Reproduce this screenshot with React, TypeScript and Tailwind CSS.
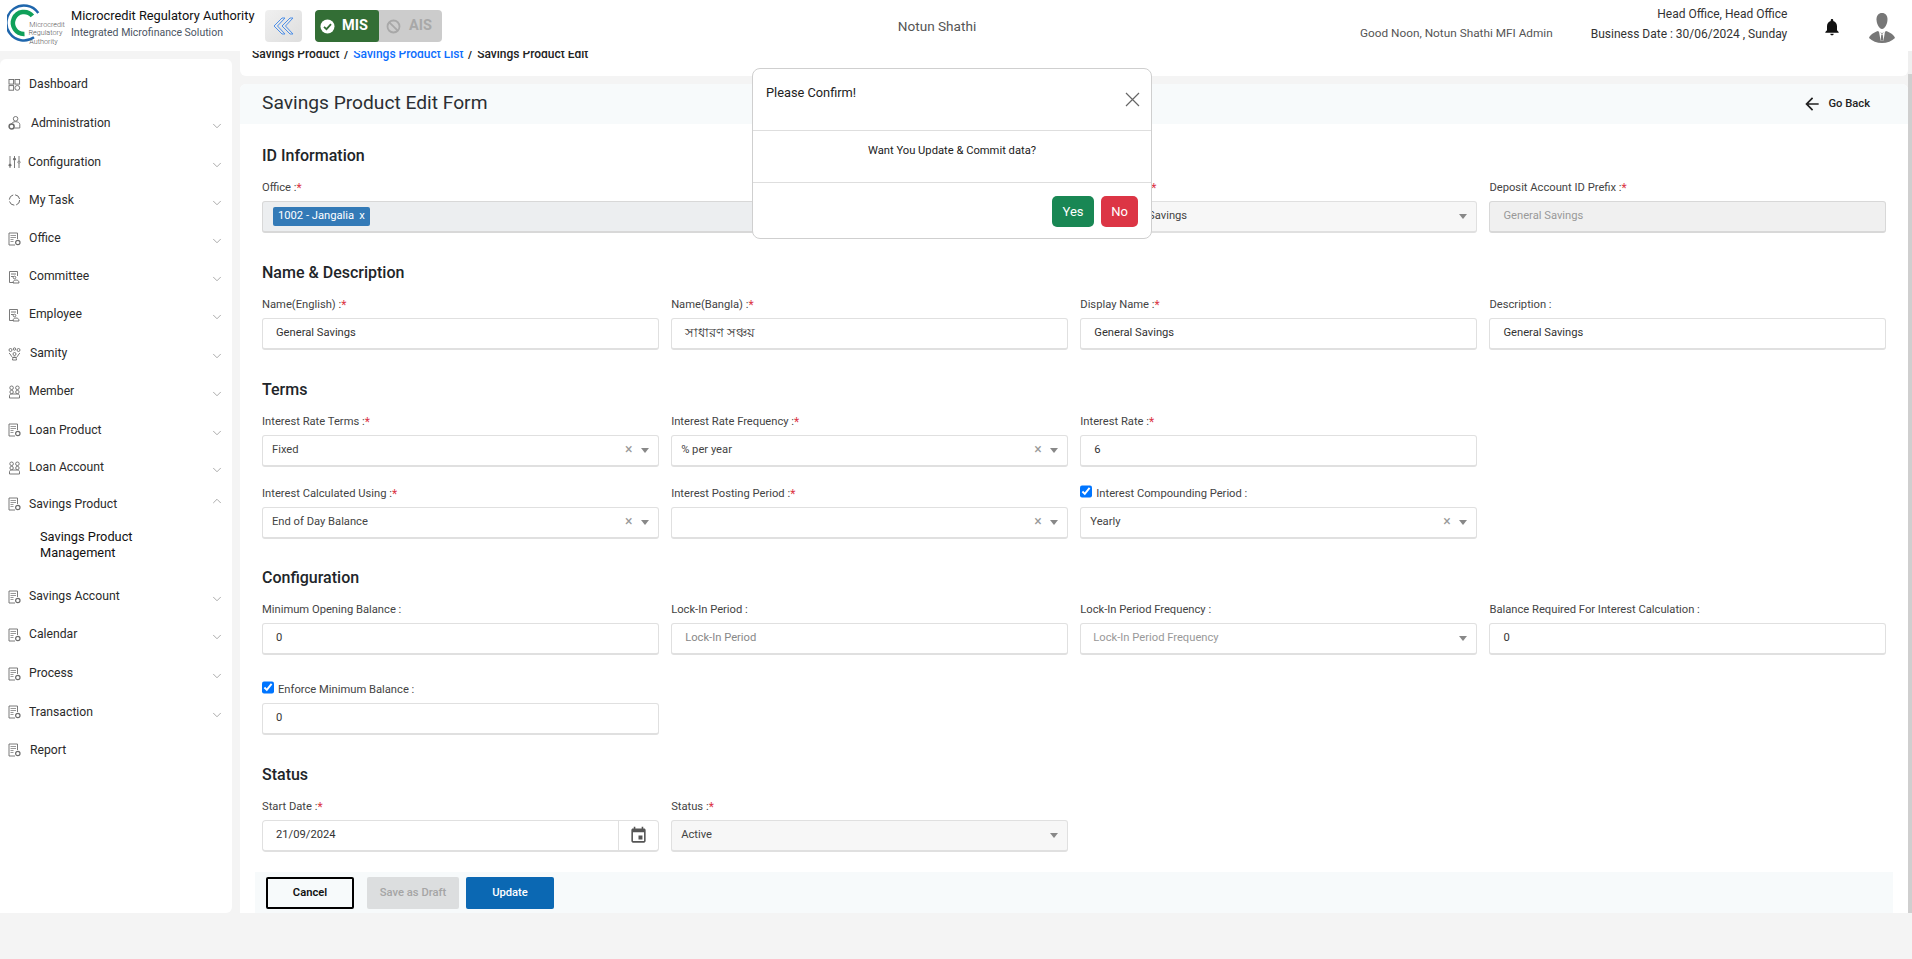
import { ChevronDown, ChevronUp } from "lucide-react"

type NavIcon = "grid" | "admin" | "sliders" | "task" | "doc" | "committee" | "samity" | "people"

const navItems: { label: string; icon: NavIcon; row: string; text: string; open?: boolean; none?: boolean }[] = [
    { label: "Dashboard", icon: "grid", row: "h-[37px]", text: "ml-[8px]", none: true },
    { label: "Administration", icon: "admin", row: "h-[40px]", text: "ml-[10px]" },
    { label: "Configuration", icon: "sliders", row: "h-[38px]", text: "ml-[7px]" },
    { label: "My Task", icon: "task", row: "h-[38px]", text: "ml-[8px]" },
    { label: "Office", icon: "doc", row: "h-[39px]", text: "ml-[8px]" },
    { label: "Committee", icon: "committee", row: "h-[37px]", text: "ml-[8px]" },
    { label: "Employee", icon: "committee", row: "h-[39px]", text: "ml-[8px]" },
    { label: "Samity", icon: "samity", row: "h-[39px]", text: "ml-[9px]" },
    { label: "Member", icon: "people", row: "h-[37px]", text: "ml-[8px]" },
    { label: "Loan Product", icon: "doc", row: "h-[40px]", text: "ml-[8px]" },
    { label: "Loan Account", icon: "people", row: "h-[35px]", text: "ml-[8px]" },
    { label: "Savings Product", icon: "doc", row: "h-[38px]", text: "ml-[8px]", open: true },
]

const navItemsBottom: typeof navItems = [
    { label: "Savings Account", icon: "doc", row: "h-[37px]", text: "ml-[8px]" },
    { label: "Calendar", icon: "doc", row: "h-[39px]", text: "ml-[8px]" },
    { label: "Process", icon: "doc", row: "h-[39px]", text: "ml-[8px]" },
    { label: "Transaction", icon: "doc", row: "h-[38px]", text: "ml-[8px]" },
    { label: "Report", icon: "doc", row: "h-[38px]", text: "ml-[9px]", none: true },
]

function SideIcon({ name }: { name: NavIcon }) {
    const common = { width: 13, height: 14, viewBox: "0 0 13 14", fill: "none", stroke: "#6b6b6b", strokeWidth: 0.9 }
    if (name === "grid") {
        return (
            <svg {...common}>
                <rect x="1" y="1.5" width="4.6" height="4.6" />
                <rect x="7" y="1.5" width="4.6" height="4.6" />
                <rect x="1" y="7.6" width="4.6" height="4.6" />
                <circle cx="9.3" cy="9.9" r="2.4" />
            </svg>
        )
    }
    if (name === "admin") {
        return (
            <svg {...common}>
                <circle cx="7.6" cy="2.8" r="2.3" />
                <path d="M3.5 8.5c0-1.800 1.800-2.800 4.100-2.800s4.200 1 4.200 2.800V12H6.500" />
                <circle cx="3.6" cy="10.400" r="2.500" strokeWidth="1.500" />
            </svg>
        )
    }
    if (name === "sliders") {
        return (
            <svg {...common}>
                <path d="M2 1v8M2 11.500V13M6.500 1v2M6.500 5.500V13M11 1v5M11 8.500V13" />
                <circle cx="2" cy="10.200" r="1.100" fill="#6b6b6b" />
                <circle cx="6.500" cy="4.200" r="1.100" fill="#6b6b6b" />
                <circle cx="11" cy="7.200" r="1.100" />
            </svg>
        )
    }
    if (name === "task") {
        return (
            <svg {...common}>
                <circle cx="6.500" cy="7" r="5.200" strokeDasharray="6.200 1.970" strokeWidth="1" />
            </svg>
        )
    }
    if (name === "doc") {
        return (
            <svg {...common}>
                <path d="M9.500 7V1H1v12h6" />
                <path d="M2.500 3.500h5.500M2.500 5.500h5.500M2.500 7.500h3M2.500 9.500h3" strokeWidth="0.7" />
                <circle cx="9.800" cy="10.500" r="2.200" strokeWidth="1.200" />
            </svg>
        )
    }
    if (name === "committee") {
        return (
            <svg {...common}>
                <path d="M9.500 6V1.500H1.500v11h4" />
                <path d="M3 4h5M3 6.500h2.500" />
                <circle cx="6.500" cy="7.500" r="1.300" />
                <path d="M5 13c0-2 1-3 3-3s3 1 3 3z" />
            </svg>
        )
    }
    if (name === "samity") {
        return (
            <svg {...common}>
                <circle cx="2.500" cy="3" r="1.500" />
                <circle cx="10.500" cy="3" r="1.500" />
                <circle cx="6.500" cy="2" r="1.200" />
                <path d="M1 6c1.500 1 2 3 3.500 4.500h4C10 9 10.500 7 12 6" />
                <circle cx="6.500" cy="7" r="1.500" />
                <path d="M4.500 13c0-2 .8-3 2-3s2 1 2 3z" />
            </svg>
        )
    }
    return (
        <svg {...common}>
            <circle cx="3.600" cy="2.800" r="1.800" />
            <circle cx="9.400" cy="2.800" r="1.800" />
            <circle cx="3.600" cy="7" r="1.700" />
            <circle cx="9.400" cy="7" r="1.700" />
            <path d="M1.500 13V10.500c0-.8.8-1.500 2-1.500h6c1.200 0 2 .7 2 1.500V13z" />
        </svg>
    )
}

function NavRow({ item }: { item: (typeof navItems)[number] }) {
    return (
        <div className={`flex items-center pl-[8px] pr-[8px] ${item.row}`}>
            <span className="flex w-[13px] shrink-0 justify-center"><SideIcon name={item.icon} /></span>
            <span className={`flex-1 text-[12.200px] text-[#2b2b2b] ${item.text}`}>{item.label}</span>
            {!item.none && (item.open
                ? <ChevronUp className="-mt-[6px] h-[14px] w-[14px] text-[#888]" strokeWidth={1.2} />
                : <ChevronDown className="mt-[5px] h-[14px] w-[14px] text-[#888]" strokeWidth={1.2} />)}
        </div>
    )
}

function Sidebar() {
    return (
        <aside className="mt-[8px] w-[232px] shrink-0 rounded-t-[6px] rounded-br-[6px] bg-white pt-[7px]">
            {navItems.map((item) => <NavRow key={item.label} item={item} />)}
            <div className="h-[55px] pl-[40px] pt-[6px] text-[12.800px] leading-[16px] text-[#111]">
                Savings Product<br />Management
            </div>
            {navItemsBottom.map((item) => <NavRow key={item.label} item={item} />)}
        </aside>
    )
}

function Logo() {
    return (
        <svg width="58" height="42" viewBox="0 0 58 42" className="shrink-0">
            <path d="M31.300 9A17.500 17.500 0 1 0 27 33.300" fill="none" stroke="#1f66ac" strokeWidth="2.400" />
            <path d="M25.400 11.900A11 11 0 1 0 17.500 29.900" fill="none" stroke="#10a05a" strokeWidth="4.500" />
            <text x="22.300" y="22.500" fontSize="7.200" fill="#555" fontFamily="Roboto, sans-serif" fontWeight="300">Microcredit</text>
            <text x="21.500" y="30.500" fontSize="7.200" fill="#555" fontFamily="Roboto, sans-serif" fontWeight="300">Regulatory</text>
            <text x="22.300" y="39.500" fontSize="7.200" fill="#555" fontFamily="Roboto, sans-serif" fontWeight="300">Authority</text>
        </svg>
    )
}

function Header() {
    return (
        <header className="flex h-[51px] items-start bg-white">
            <div className="ml-[7px] mt-[4px]"><Logo /></div>
            <div className="ml-[6px] mt-[6px] w-[194px]">
                <div className="text-[12.800px] leading-[19px] text-[#111]">Microcredit Regulatory Authority</div>
                <div className="text-[10.500px] leading-[15px] text-[#4b5563]">Integrated Microfinance Solution</div>
            </div>
            <button className="mt-[10px] flex h-[32px] w-[37px] items-center justify-center rounded-[4px] bg-gradient-to-br from-[#f0f0f0] to-[#dedede]">
                <svg width="22" height="18" viewBox="0 0 22 18" fill="none" stroke="#4d8fe8" strokeWidth="1" strokeLinejoin="round">
                    <path d="M9 1 1 9l8 8h3L4.500 9 12 1z" />
                    <path d="M17 1 9 9l8 8h3L12.500 9 20 1z" />
                </svg>
            </button>
            <div className="ml-[13px] mt-[10px] flex h-[32px] w-[127px] overflow-hidden rounded-[4px] bg-[#cccccc]">
                <div className="flex w-[64px] items-center gap-[7px] rounded-[3px] bg-[#336e35] pl-[5px]">
                    <svg width="15" height="15" viewBox="0 0 15 15">
                        <circle cx="7.500" cy="7.500" r="7" fill="#fff" />
                        <path d="M4 7.800 6.500 10.200 11 5.200" fill="none" stroke="#336e35" strokeWidth="1.800" />
                    </svg>
                    <span className="text-[14.500px] font-bold text-white">MIS</span>
                </div>
                <div className="flex flex-1 items-center gap-[8px] pl-[7px]">
                    <svg width="15" height="15" viewBox="0 0 15 15" fill="none" stroke="#a8a8a8" strokeWidth="1.800">
                        <circle cx="7.500" cy="7.500" r="6" />
                        <path d="M3.300 3.300 11.700 11.700" />
                    </svg>
                    <span className="text-[14.500px] font-bold text-[#a8a8a8]">AIS</span>
                </div>
            </div>
            <div className="ml-[435px] mt-[16px] w-[120px] text-center text-[13.600px] leading-[20px] text-[#555]">Notun Shathi</div>
            <div className="ml-[363px] mt-[24px] text-[11.800px] leading-[18px] text-[#555]">Good Noon, Notun Shathi MFI Admin</div>
            <div className="ml-[38px] mt-[5px] text-right text-[12px] leading-[19px] text-[#333]">
                <div>Head Office, Head Office</div>
                <div className="mt-[1px]">Business Date : 30/06/2024 , Sunday</div>
            </div>
            <svg width="20" height="20" viewBox="0 0 24 24" fill="#111" className="ml-[35px] mt-[17px] shrink-0">
                <path d="M12 22c1.100 0 2-.9 2-2h-4c0 1.100.89 2 2 2zm6-6v-5c0-3.070-1.640-5.640-4.500-6.320V4c0-.83-.67-1.500-1.500-1.500s-1.500.67-1.500 1.500v.68C7.630 5.360 6 7.920 6 11v5l-2 2v1h16v-1l-2-2z" />
            </svg>
            <svg width="26" height="30" viewBox="0 0 26 30" className="ml-[27px] mt-[13px] shrink-0">
                <path d="M13 0c3.500 0 5.500 2.500 5.500 6.500 0 4-2.500 9.500-5.500 9.500S7.500 10.500 7.500 6.500C7.500 2.500 9.500 0 13 0z" fill="#777" />
                <path d="M0 25c1-3.500 5-5.500 9-7 1 1 2.500 2 4 2s3-1 4-2c4 1.500 8 3.500 9 7-3 3-8 5-13 5S3 28 0 25z" fill="#777" />
                <path d="M10 18.500 13 21l3-2.500-1.500 9h-3z" fill="#fff" />
                <path d="M12.300 21.500h1.400l.6 5-1.300 1.500-1.300-1.500z" fill="#777" />
            </svg>
        </header>
    )
}

function Label({ text, required, check }: { text: string; required?: boolean; check?: boolean }) {
    return (
        <label className="flex h-[16px] items-center text-[11.200px] leading-[16px] text-[#444]">
            {check && <input type="checkbox" checked readOnly className="-mt-[5px] mr-[4px] h-[13px] w-[12px] accent-[#0075ff]" />}
            <span>{text} :</span>
            {required && <span className="text-[12px] text-[#dc3545]">*</span>}
        </label>
    )
}

function TextField({ label, value, required, placeholder, check, valueClass }: { label: string; value?: string; required?: boolean; placeholder?: string; check?: boolean; valueClass?: string }) {
    return (
        <div>
            <Label text={label} required={required} check={check} />
            <div className={`mt-[5px] flex h-[32px] items-center rounded-[3px] border border-b-2 border-[#e0e0e0] bg-white pl-[13px] text-[11.200px] ${placeholder ? "text-[#888]" : "text-[#333]"} ${valueClass ?? ""}`}>
                {value ?? placeholder}
            </div>
        </div>
    )
}

function SelectField({ label, value, required, clearable, placeholder, muted, check, valueClass }: { label: string; value?: string; required?: boolean; clearable?: boolean; placeholder?: string; muted?: boolean; check?: boolean; valueClass?: string }) {
    return (
        <div>
            <Label text={label} required={required} check={check} />
            <div className={`mt-[5px] flex h-[32px] items-center rounded-[3px] border border-b-2 border-[#e0e0e0] text-[11.200px] ${muted ? "bg-[#f7f7f7]" : "bg-white"}`}>
                <span className={`flex-1 ${placeholder ? "pl-[12px] text-[#999]" : `${valueClass ?? "pl-[9px]"} text-[#444]`}`}>{value ?? placeholder}</span>
                {clearable && <span className="mr-[8px] -mt-[2px] text-[14px] text-[#999]">×</span>}
                <span className="mr-[9px] -mt-[1px] h-0 w-0 border-x-[4px] border-t-[5px] border-x-transparent border-t-[#888]" />
            </div>
        </div>
    )
}

function SectionTitle({ children, className }: { children: string; className: string }) {
    return <h3 className={`text-[16px] font-medium leading-[20px] text-[#212529] ${className}`}>{children}</h3>
}

function FormBody() {
    return (
        <div className="flex-1 px-[22px] pt-[22px]">
            <SectionTitle className="mb-[14px]">ID Information</SectionTitle>
            <div className="grid grid-cols-4 gap-x-[12.600px]">
                <div className="col-span-2">
                    <Label text="Office" required />
                    <div className="mt-[5px] flex h-[32px] items-center rounded-[3px] border border-b-2 border-[#d8d8d8] bg-[#eceef0] pl-[10px]">
                        <span className="flex h-[19px] items-center gap-[5px] rounded-[2px] bg-[#337ab7] px-[5px] text-[11.200px] text-white">1002 - Jangalia <span>x</span></span>
                    </div>
                </div>
                <SelectField label="Product Type" value="General Savings" required muted valueClass="pl-[26px]" />
                <div>
                    <Label text="Deposit Account ID Prefix" required />
                    <div className="mt-[5px] flex h-[32px] items-center rounded-[3px] border border-b-2 border-[#d8d8d8] bg-[#f0f0f0] pl-[13px] text-[11.200px] text-[#999]">General Savings</div>
                </div>
            </div>

            <SectionTitle className="mb-[14px] mt-[30px]">Name &amp; Description</SectionTitle>
            <div className="grid grid-cols-4 gap-x-[12.600px]">
                <TextField label="Name(English)" value="General Savings" required />
                <TextField label="Name(Bangla)" value="সাধারণ সঞ্চয়" required valueClass="text-[13.400px]" />
                <TextField label="Display Name" value="General Savings" required />
                <TextField label="Description" value="General Savings" />
            </div>

            <SectionTitle className="mb-[14px] mt-[30px]">Terms</SectionTitle>
            <div className="grid grid-cols-4 gap-x-[12.600px] gap-y-[19px]">
                <SelectField label="Interest Rate Terms" value="Fixed" required clearable />
                <SelectField label="Interest Rate Frequency" value="% per year" required clearable />
                <TextField label="Interest Rate" value="6" required />
                <div />
                <SelectField label="Interest Calculated Using" value="End of Day Balance" required clearable />
                <SelectField label="Interest Posting Period" value="" required clearable />
                <SelectField label="Interest Compounding Period" value="Yearly" clearable check />
            </div>

            <SectionTitle className="mb-[14px] mt-[29px]">Configuration</SectionTitle>
            <div className="grid grid-cols-4 gap-x-[12.600px] gap-y-[27px]">
                <TextField label="Minimum Opening Balance" value="0" />
                <TextField label="Lock-In Period" placeholder="Lock-In Period" />
                <SelectField label="Lock-In Period Frequency" placeholder="Lock-In Period Frequency" />
                <TextField label="Balance Required For Interest Calculation" value="0" />
                <TextField label="Enforce Minimum Balance" value="0" check />
            </div>

            <SectionTitle className="mb-[14px] mt-[30px]">Status</SectionTitle>
            <div className="grid grid-cols-4 gap-x-[12.600px]">
                <div>
                    <Label text="Start Date" required />
                    <div className="mt-[5px] flex h-[32px] items-center rounded-[4px] border border-b-2 border-[#e0e0e0] bg-white text-[11.200px] text-[#333]">
                        <span className="flex-1 pl-[13px]">21/09/2024</span>
                        <span className="flex h-full w-[40px] items-center justify-center border-l border-[#e0e0e0]">
                            <svg width="19" height="19" viewBox="0 0 24 24" fill="#555">
                                <path d="M17 12h-5v5h5v-5zM16 1v2H8V1H6v2H5c-1.110 0-1.990.9-1.990 2L3 19c0 1.100.89 2 2 2h14c1.100 0 2-.9 2-2V5c0-1.100-.9-2-2-2h-1V1h-2zm3 18H5V8h14v11z" />
                            </svg>
                        </span>
                    </div>
                </div>
                <SelectField label="Status" value="Active" required muted />
            </div>

            <div className="-mx-[7px] mt-[20px] flex h-[41px] gap-[7px] bg-[#f7fafb] pl-[11px] pt-[5px]">
                <button className="mr-[6px] h-[32px] w-[88px] rounded-[2px] border-2 border-black text-[11.200px] font-semibold text-[#111]">Cancel</button>
                <button className="h-[32px] w-[92px] rounded-[2px] bg-[#dcdedf] text-[11.200px] font-medium text-[#a5a5a5]">Save as Draft</button>
                <button className="h-[32px] w-[88px] rounded-[2px] bg-[#0b68b3] text-[11.200px] font-medium text-white">Update</button>
            </div>
        </div>
    )
}

function ConfirmModal() {
    return (
        <div className="absolute left-[752px] top-[68px] flex h-[171px] w-[400px] flex-col rounded-[8px] border border-[#cfcfcf] bg-white">
            <div className="flex h-[62px] items-start justify-between border-b border-[#dedede] pl-[13px] pr-[11px] pt-[14px]">
                <span className="text-[12.800px] leading-[20px] text-[#222]">Please Confirm!</span>
                <svg width="15" height="15" viewBox="0 0 15 15" stroke="#666" strokeWidth="1.200" className="mt-[9px]">
                    <path d="M1 1 14 14M14 1 1 14" />
                </svg>
            </div>
            <div className="h-[52px] border-b border-[#dedede] pt-[12px] text-center text-[11.200px] leading-[16px] text-[#222]">
                Want You Update &amp; Commit data?
            </div>
            <div className="flex flex-1 items-start justify-end gap-[7px] pr-[13px] pt-[13px]">
                <button className="h-[31px] w-[42px] rounded-[5px] bg-[#198754] text-[13px] text-white">Yes</button>
                <button className="h-[31px] w-[37px] rounded-[5px] bg-[#dc3545] text-[13px] text-white">No</button>
            </div>
        </div>
    )
}

export default function App() {
    return (
        <div className="relative h-[959px] overflow-hidden bg-[#f4f4f4] font-['Roboto','Noto_Sans',sans-serif]">
            <Header />
            <div className="flex h-[862px]">
                <Sidebar />
                <main className="ml-[8px] flex min-w-0 flex-1 flex-col">
                    <div className="h-[25px] overflow-hidden rounded-b-[6px] bg-white pl-[12px]">
                        <div className="-mt-[7px] flex h-[20px] items-center gap-[4.500px] text-[12px] font-medium text-[#222]">
                            <span>Savings Product</span><span>/</span>
                            <span className="text-[#0d6efd]">Savings Product List</span><span>/</span>
                            <span>Savings Product Edit</span>
                        </div>
                    </div>
                    <div className="mt-[8px] flex min-h-0 flex-1 flex-col overflow-hidden rounded-t-[6px] bg-white">
                        <div className="flex h-[40px] shrink-0 items-center justify-between bg-[#f7fafb] pl-[22px] pr-[38px]">
                            <h2 className="-mt-[2px] text-[19.200px] text-[#2b2f33]">Savings Product Edit Form</h2>
                            <div className="flex items-center gap-[6px] text-[11.200px] font-medium text-[#222]">
                                <svg width="20" height="20" viewBox="0 0 24 24" fill="#222">
                                    <path d="M20 11H7.830l5.590-5.590L12 4l-8 8 8 8 1.410-1.410L7.830 13H20v-2z" />
                                </svg>
                                Go Back
                            </div>
                        </div>
                        <FormBody />
                    </div>
                </main>
                <div className="flex w-[4px] shrink-0 flex-col">
                    <div className="h-[23px] bg-[#efefef]" />
                    <div className="flex-1 bg-[#cfcfcf]" />
                </div>
            </div>
            <ConfirmModal />
        </div>
    )
}
